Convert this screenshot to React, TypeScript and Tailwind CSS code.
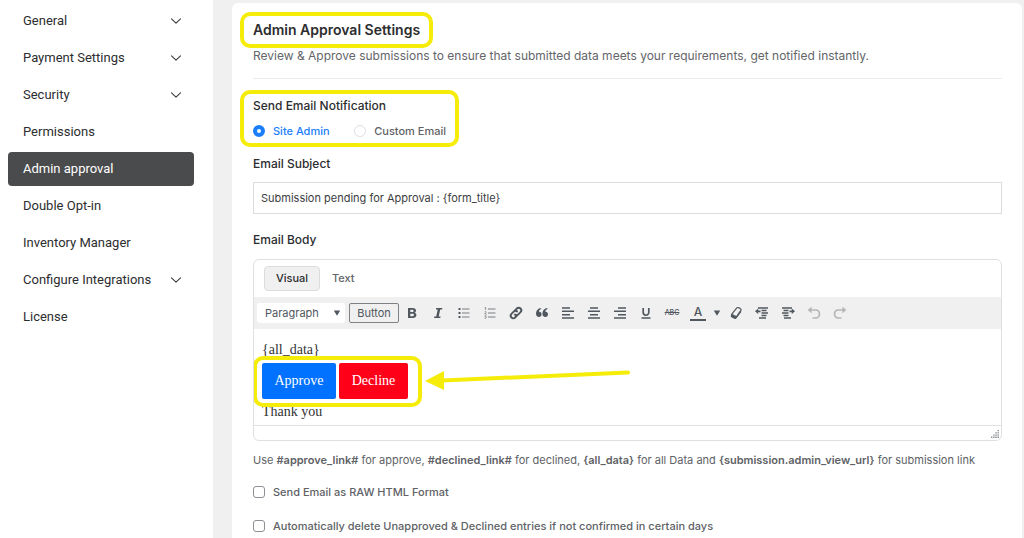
import React, { useState } from 'react';

interface MenuItem {
  label: string;
  hasChildren?: boolean;
}

const menuItems: MenuItem[] = [
  { label: 'General', hasChildren: true },
  { label: 'Payment Settings', hasChildren: true },
  { label: 'Security', hasChildren: true },
  { label: 'Permissions' },
  { label: 'Admin approval' },
  { label: 'Double Opt-in' },
  { label: 'Inventory Manager' },
  { label: 'Configure Integrations', hasChildren: true },
  { label: 'License' },
];

const ChevronDown = () => (
  <svg width="12" height="8" viewBox="0 0 12 8" fill="none" stroke="#3c3d3f" strokeWidth="1.1" strokeLinecap="round" strokeLinejoin="round">
    <path d="M1.5 1.8 6 6.2l4.5-4.4" />
  </svg>
);

const Icon = ({ children }: { children: React.ReactNode }) => (
  <svg width="16" height="16" viewBox="0 0 16 16" fill="currentColor" stroke="none">
    {children}
  </svg>
);

const Caret = () => (
  <svg width="8" height="6" viewBox="0 0 8 6" fill="#50575e">
    <path d="M.8.5h6.4L4 5.7z" />
  </svg>
);

const tools = [
  {
    name: 'Bold',
    icon: <path fillRule="evenodd" d="M4 3h4.6c2.2 0 3.4.9 3.4 2.6 0 1.1-.6 1.9-1.6 2.2 1.3.2 2 1.1 2 2.3C12.4 12 11 13 8.8 13H4zm2.300 1.800v2.200h1.900c.9 0 1.400-.4 1.400-1.100S9.100 4.800 8.200 4.800zm0 3.900v2.500h2.200c1 0 1.500-.4 1.500-1.200S9.500 8.700 8.500 8.700z" />,
  },
  { name: 'Italic', icon: <path d="M6.200 3h6.200l-.3 1.600h-1.900L8.700 11.400h1.900l-.3 1.600H4l.3-1.600h1.900l1.500-6.800H5.900z" /> },
  {
    name: 'Bulleted list',
    icon: (
      <>
        <path d="M2.500 3h2v2h-2zM2.500 7h2v2h-2zM2.500 11h2v2h-2z" />
        <path opacity=".75" d="M6 3.400h7.500v1.200H6zM6 7.400h7.500v1.200H6zM6 11.400h7.500v1.200H6z" />
      </>
    ),
  },
  {
    name: 'Numbered list',
    icon: (
      <g opacity=".75">
        <path d="M6 3.400h7.500v1.200H6zM6 7.400h7.500v1.200H6zM6 11.400h7.500v1.200H6z" />
        <path fill="none" stroke="currentColor" strokeWidth=".8" d="M2.700 2.900l1-.5V5M2.600 6.800c1.200-.7 2 .1 1.200 1L2.700 9h1.800M2.600 10.900h1.700l-.9 1c1.500.1 1.100 1.700-.8 1.200" />
      </g>
    ),
  },
  {
    name: 'Link',
    icon: (
      <g fill="none" stroke="currentColor" strokeWidth="1.900" strokeLinecap="round" transform="rotate(-45 8 8)">
        <path d="M6.800 10.600H4.200a2.600 2.600 0 0 1 0-5.200h3.400a2.600 2.600 0 0 1 2.300 2.200" />
        <path d="M9.200 5.400h2.600a2.600 2.600 0 0 1 0 5.200H8.400a2.600 2.600 0 0 1-2.300-2.200" />
      </g>
    ),
  },
  {
    name: 'Blockquote',
    icon: <path d="M7.300 3.800C5.700 4.600 5 5.600 4.900 6.900c1.600-.2 2.700.8 2.700 2.400 0 1.700-1.100 2.800-2.700 2.800-1.800 0-2.900-1.300-2.900-3.500 0-2.800 1.600-5 4.600-5.700zM13.700 3.800c-1.600.8-2.300 1.800-2.400 3.100 1.600-.2 2.700.8 2.700 2.400 0 1.700-1.100 2.800-2.700 2.800-1.800 0-2.900-1.300-2.900-3.500 0-2.800 1.600-5 4.600-5.700z" />,
  },
  { name: 'Align left', icon: <path d="M2 2.300h8v1.500H2zM2 5.600h12v1.500H2zM2 8.900h8v1.500H2zM2 12.200h12v1.500H2z" /> },
  { name: 'Align center', icon: <path d="M4 2.300h8v1.500H4zM2 5.600h12v1.500H2zM4 8.900h8v1.500H4zM2 12.200h12v1.500H2z" /> },
  { name: 'Align right', icon: <path d="M6 2.300h8v1.500H6zM2 5.600h12v1.500H2zM6 8.900h8v1.500H6zM2 12.200h12v1.500H2z" /> },
  {
    name: 'Underline',
    icon: (
      <>
        <path fill="none" stroke="currentColor" strokeWidth="1.700" d="M5.200 3v4.300c0 3.900 5.600 3.900 5.600 0V3" />
        <path d="M3.500 12.300h9v1.400h-9z" />
      </>
    ),
  },
];

const eraser = (
  <>
    <path fill="none" stroke="currentColor" strokeWidth="1.200" strokeLinejoin="round" d="M8.600 3.200c.5-.6 1.300-.8 2-.6l1.700.9c.7.4.9 1.200.5 1.900L8.400 11.800 3.600 9.400z" />
    <path d="M3.100 9.200 8.400 12l4.700-6.400.2 1.300-5 6.500c-.5.6-1.300.7-2 .4l-2.600-1.400c-.8-.5-1.100-1.400-.8-2.200z" />
  </>
);

const outdent = (
  <path d="M4 2.300h10v1.500H4zM7.500 4.800h5v1.500h-5zM7.500 7.300H14v1.500H7.500zM7.500 9.800h5v1.500h-5zM5 12.300h7v1.500H5zM1 6.300 4.200 3.600v1.800h2.300v1.900H4.200v1.800z" />
);

const indent = (
  <path d="M2 2.300h10v1.500H2zM3.500 4.800h5v1.500h-5zM2 7.300h6.500v1.500H2zM3.500 9.800h5v1.500h-5zM4 12.300h7v1.500H4zM15 6.300 11.800 3.600v1.800H9.500v1.900h2.300v1.800z" />
);

const undo = (
  <>
    <path d="M1.600 5 5.600 1.800v6.400z" />
    <path fill="none" stroke="currentColor" strokeWidth="1.700" d="M5 5h4.500c5.200 0 5.300 8 .2 8H6.500" />
  </>
);

const redo = (
  <>
    <path d="M14.400 5l-4-3.200v6.400z" />
    <path fill="none" stroke="currentColor" strokeWidth="1.700" d="M11 5H6.500c-5.200 0-5.300 8-.2 8h3.200" />
  </>
);

const ToolButton = ({ name, disabled, children }: { name: string; disabled?: boolean; children: React.ReactNode }) => (
  <button
    type="button"
    aria-label={name}
    disabled={disabled}
    className="flex h-6 w-[26px] shrink-0 items-center justify-center text-[#50575e] disabled:text-[#b4b6b8]"
  >
    {children}
  </button>
);

const Sidebar = ({ active, onSelect }: { active: string; onSelect: (label: string) => void }) => (
  <aside className="w-[213px] shrink-0 bg-white pl-2 pr-[19px] pt-1">
    <nav className="flex flex-col gap-[3px]">
      {menuItems.map(item => (
        <a
          key={item.label}
          href="#"
          onClick={() => onSelect(item.label)}
          className={`flex h-[34px] items-center justify-between rounded-[4px] pl-[15px] pr-3 font-['Roboto','Liberation_Sans',sans-serif] text-[13px] ${
            item.label === active ? 'bg-[#4a4b4d] text-white' : 'text-[#2c2d2f]'
          }`}
        >
          {item.label}
          {item.hasChildren && <ChevronDown />}
        </a>
      ))}
    </nav>
  </aside>
);

const App: React.FC = () => {
  const [active, setActive] = useState('Admin approval');
  const [recipient, setRecipient] = useState('site');
  const [subject, setSubject] = useState('Submission pending for Approval : {form_title}');

  const radioClass =
    'h-3 w-3 appearance-none rounded-full border border-[#dcdfe6] bg-white checked:border-4 checked:border-[#1a7efb]';
  const checkboxClass = 'h-3 w-3 appearance-none rounded-[3px] border border-[#8c8f94] bg-white';

  return (
    <div className="flex h-screen overflow-hidden bg-[#f0f0f1] font-['Inter','Liberation_Sans',sans-serif] text-[#2c2d2f]">
      <Sidebar active={active} onSelect={setActive} />

      <main className="min-w-0 flex-1 pl-[19px] pr-[2px] pt-[3px]">
        <div className="min-h-full rounded-t-md bg-white pl-[21px] pr-5 pt-[17px]">
          <header className="border-b border-[#ececec] pb-[14px]">
            <h1 className="relative w-fit text-[14px] font-semibold leading-5">
              Admin Approval Settings
              <span className="pointer-events-none absolute -bottom-2 -left-[13px] -right-[13px] -top-2 rounded-[10px] border-4 border-[#f5ec0a]" />
            </h1>
            <p className="mt-2 text-[12px] leading-4 text-[#63656a]">
              Review &amp; Approve submissions to ensure that submitted data meets your requirements, get notified instantly.
            </p>
          </header>

          <div className="relative mt-[19px] w-[193px]">
            <fieldset>
              <legend className="text-[12px] font-medium leading-4">Send Email Notification</legend>
              <div className="mt-[9px] flex items-center justify-between text-[11px] font-medium leading-4">
                <label className={`flex items-center gap-2 ${recipient === 'site' ? 'text-[#1a7efb]' : 'text-[#606266]'}`}>
                  <input type="radio" name="recipient" className={radioClass} checked={recipient === 'site'} onChange={() => setRecipient('site')} />
                  Site Admin
                </label>
                <label className={`flex items-center gap-2 ${recipient === 'custom' ? 'text-[#1a7efb]' : 'text-[#606266]'}`}>
                  <input type="radio" name="recipient" className={radioClass} checked={recipient === 'custom'} onChange={() => setRecipient('custom')} />
                  Custom Email
                </label>
              </div>
            </fieldset>
            <span className="pointer-events-none absolute -bottom-2 -left-[13px] -right-[13px] -top-2 rounded-[10px] border-4 border-[#f5ec0a]" />
          </div>

          <label htmlFor="subject" className="mt-[17px] block text-[12px] font-medium leading-4">
            Email Subject
          </label>
          <input
            id="subject"
            type="text"
            value={subject}
            onChange={e => setSubject(e.target.value)}
            className="mt-[10px] block h-8 w-full border border-[#dcdcde] px-[7px] text-[11px] text-[#3c3d3f] outline-none"
          />

          <h2 className="mt-[18px] text-[12px] font-medium leading-4">Email Body</h2>
          <section className="mt-[11px] overflow-hidden rounded-md border border-[#e0e0e2]">
            <div className="flex h-[37px] items-center gap-3 px-[10px] text-[11px] font-medium">
              <button type="button" className="h-[25px] w-14 rounded-[4px] border border-[#dcdcde] bg-[#f0f0f0]">
                Visual
              </button>
              <button type="button" className="text-[#63656a]">
                Text
              </button>
            </div>

            <div className="flex h-8 items-center bg-[#f0f0f0] pl-[3px]">
              <div className="relative">
                <select aria-label="Block format" className="block h-5 w-[88px] appearance-none rounded-[3px] bg-white pl-2 text-[11px] leading-5 text-[#50575e]">
                  <option>Paragraph</option>
                </select>
                <span className="pointer-events-none absolute inset-y-0 right-1 flex items-center">
                  <Caret />
                </span>
              </div>
              <button type="button" className="ml-1 h-5 w-[50px] rounded-[2px] border border-[#7e8388] text-[11px] text-[#50575e]">
                Button
              </button>
              {tools.map(tool => (
                <ToolButton key={tool.name} name={tool.name}>
                  <Icon>{tool.icon}</Icon>
                </ToolButton>
              ))}
              <ToolButton name="Strikethrough">
                <span className="text-[7px] font-medium line-through">ABC</span>
              </ToolButton>
              <ToolButton name="Text color">
                <span className="w-4 border-b-2 border-[#50575e] text-[12px] font-medium leading-[14px]">A</span>
              </ToolButton>
              <button type="button" aria-label="Choose color" className="flex h-6 w-3 items-center justify-center">
                <Caret />
              </button>
              <ToolButton name="Clear formatting">
                <Icon>{eraser}</Icon>
              </ToolButton>
              <ToolButton name="Decrease indent">
                <Icon>{outdent}</Icon>
              </ToolButton>
              <ToolButton name="Increase indent">
                <Icon>{indent}</Icon>
              </ToolButton>
              <ToolButton name="Undo" disabled>
                <Icon>{undo}</Icon>
              </ToolButton>
              <ToolButton name="Redo" disabled>
                <Icon>{redo}</Icon>
              </ToolButton>
            </div>

            <div className="px-2 pb-1 pt-3 font-['Liberation_Serif',serif] text-[14px] leading-[18px] text-[#333]">
              <p>{'{all_data}'}</p>
              <div className="relative my-1 flex w-[146px] gap-[3px] text-white">
                <a href="#" className="flex h-9 w-[74px] items-center justify-center rounded-[2px] bg-[#0072ff]">
                  Approve
                </a>
                <a href="#" className="flex h-9 w-[69px] items-center justify-center rounded-[2px] bg-[#ff0019]">
                  Decline
                </a>
                <span className="pointer-events-none absolute -bottom-2 -left-[9px] -right-[14px] -top-[7px] rounded-[10px] border-4 border-[#f5ec0a]" />
                <svg className="pointer-events-none absolute left-[162px] top-1" width="208" height="24" viewBox="0 0 208 24" fill="#f5ec0a">
                  <path d="M1 14 20 4v19z" />
                  <path d="M18 13.500 204 5.500" stroke="#f5ec0a" strokeWidth="4" strokeLinecap="round" />
                </svg>
              </div>
              <p>Thank you</p>
            </div>

            <div className="flex h-[15px] items-end justify-end border-t border-[#e0e0e2] p-[2px]">
              <svg width="8" height="8" viewBox="0 0 8 8" fill="#8c8f94">
                <path d="M6.500 0H8v1.300H6.500zM4.300 2.200h1.500v1.300H4.300zM6.500 2.200H8v1.300H6.500zM2.200 4.400h1.400v1.300H2.200zM4.300 4.400h1.500v1.300H4.300zM6.500 4.400H8v1.300H6.500zM0 6.600h1.400v1.300H0zM2.200 6.600h1.400v1.300H2.200zM4.300 6.600h1.500v1.300H4.300zM6.500 6.600H8v1.300H6.500z" />
              </svg>
            </div>
          </section>

          <p className="mt-[11px] text-[11px] leading-4 text-[#606266]">
            Use <b className="font-semibold">#approve_link#</b> for approve, <b className="font-semibold">#declined_link#</b> for declined,{' '}
            <b className="font-semibold">{'{all_data}'}</b> for all Data and <b className="font-semibold">{'{submission.admin_view_url}'}</b> for
            submission link
          </p>
          <label className="mt-4 flex items-center gap-2 text-[11px] font-medium leading-4 text-[#606266]">
            <input type="checkbox" className={checkboxClass} />
            Send Email as RAW HTML Format
          </label>
          <label className="mt-[18px] flex items-center gap-2 text-[11px] font-medium leading-4 text-[#606266]">
            <input type="checkbox" className={checkboxClass} />
            Automatically delete Unapproved &amp; Declined entries if not confirmed in certain days
          </label>
        </div>
      </main>
    </div>
  );
};

export default App;
